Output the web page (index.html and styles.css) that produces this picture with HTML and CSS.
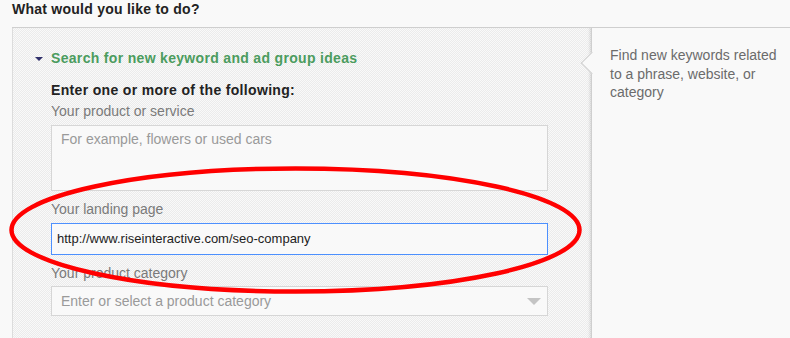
FILE: index.html
```html
<!DOCTYPE html>
<html lang="en">
<head>
    <meta charset="UTF-8">
    <title>Keyword Planner</title>
    <link rel="stylesheet" href="styles.css">
</head>
<body>
    <h3 class="page-title">What would you like to do?</h3>
    <div class="panel">
        <div class="panel-main">
            <div class="section-head">Search for new keyword and ad group ideas</div>
            <div class="form-intro">Enter one or more of the following:</div>
            <label class="field-label first">Your product or service</label>
            <div class="field textarea">For example, flowers or used cars</div>
            <label class="field-label">Your landing page</label>
            <div class="field input active">http://www.riseinteractive.com/seo-company</div>
            <label class="field-label">Your product category</label>
            <div class="field select">Enter or select a product category<span class="select-arrow"></span></div>
        </div>
        <div class="panel-side">
            <p>Find new keywords related to a phrase, website, or category</p>
        </div>
    </div>

    <svg class="mark" width="790" height="338" viewBox="0 0 790 338">
        <ellipse cx="295.5" cy="230" rx="284" ry="61.5" fill="none" stroke="#ff0000" stroke-width="4.5"/>
    </svg>
</body>
</html>
```

FILE: styles.css
```css
body {
    margin: 0;
    background: #f9f9f9;
    font-family: "Liberation Sans", Arial, sans-serif;
    font-size: 14px;
    width: 790px;
    height: 338px;
    overflow: hidden;
    position: relative;
}
.page-title {
    margin: 0 0 9px 12px;
    font-size: 14px;
    line-height: 18px;
    font-weight: bold;
    letter-spacing: 0.25px;
    color: #222;
}
.panel {
    display: flex;
    margin-left: 12px;
    border-top: 1px solid #cfcfcf;
    height: 320px;
}
.panel-main {
    width: 540px;
    border-left: 1px solid #dcdcdc;
    padding: 21px 0 0 38px;
    background: repeating-conic-gradient(#f9f9f9 0 25%, #ebebeb 0 50%) 0 0 / 2px 2px;
    box-shadow: inset -3px 0 3px -2px rgba(0, 0, 0, 0.12);
}
.section-head {
    position: relative;
    font-weight: bold;
    line-height: 18px;
    letter-spacing: 0.32px;
    color: #4b9c5e;
}
.section-head::before {
    content: "";
    position: absolute;
    left: -16px;
    top: 8px;
    border-left: 4px solid transparent;
    border-right: 4px solid transparent;
    border-top: 4px solid #2f2f6a;
}
.form-intro {
    margin-top: 14px;
    font-weight: bold;
    line-height: 18px;
    letter-spacing: 0.33px;
    color: #222;
}
.field-label {
    display: block;
    margin-top: 9px;
    line-height: 18px;
    color: #7a7a7a;
}
.field-label.first {
    margin-top: 3px;
}
.field {
    box-sizing: border-box;
    width: 497px;
    margin-top: 5px;
    border: 1px solid #d6d6d6;
    background: #f9f9f9;
    color: #9a9a9a;
    padding: 0 9px;
}
.textarea {
    height: 66px;
    padding-top: 4px;
    line-height: 18px;
}
.input {
    height: 32px;
    line-height: 30px;
    padding-left: 5px;
    font-size: 13px;
    color: #222;
}
.input.active {
    border-color: #4d90fe;
}
.select {
    position: relative;
    height: 30px;
    margin-top: 4px;
    line-height: 28px;
}
.select-arrow {
    position: absolute;
    right: 6px;
    top: 11px;
    border-left: 7px solid transparent;
    border-right: 7px solid transparent;
    border-top: 7px solid #c4c4c4;
}
.panel-side {
    position: relative;
    flex: 1;
    border-left: 1px solid #cfcfcf;
    padding: 18px 0 0 18px;
    background: #f9f9f9;
}
.panel-side::before {
    content: "";
    position: absolute;
    left: -8.5px;
    top: 27px;
    width: 15px;
    height: 15px;
    background: #f9f9f9;
    border-left: 1px solid #cfcfcf;
    border-bottom: 1px solid #cfcfcf;
    transform: rotate(45deg);
}
.panel-side p {
    position: relative;
    margin: 0;
    width: 172px;
    line-height: 18.5px;
    color: #6b6b6b;
}
.mark {
    position: absolute;
    top: 0;
    left: 0;
    pointer-events: none;
}
```
